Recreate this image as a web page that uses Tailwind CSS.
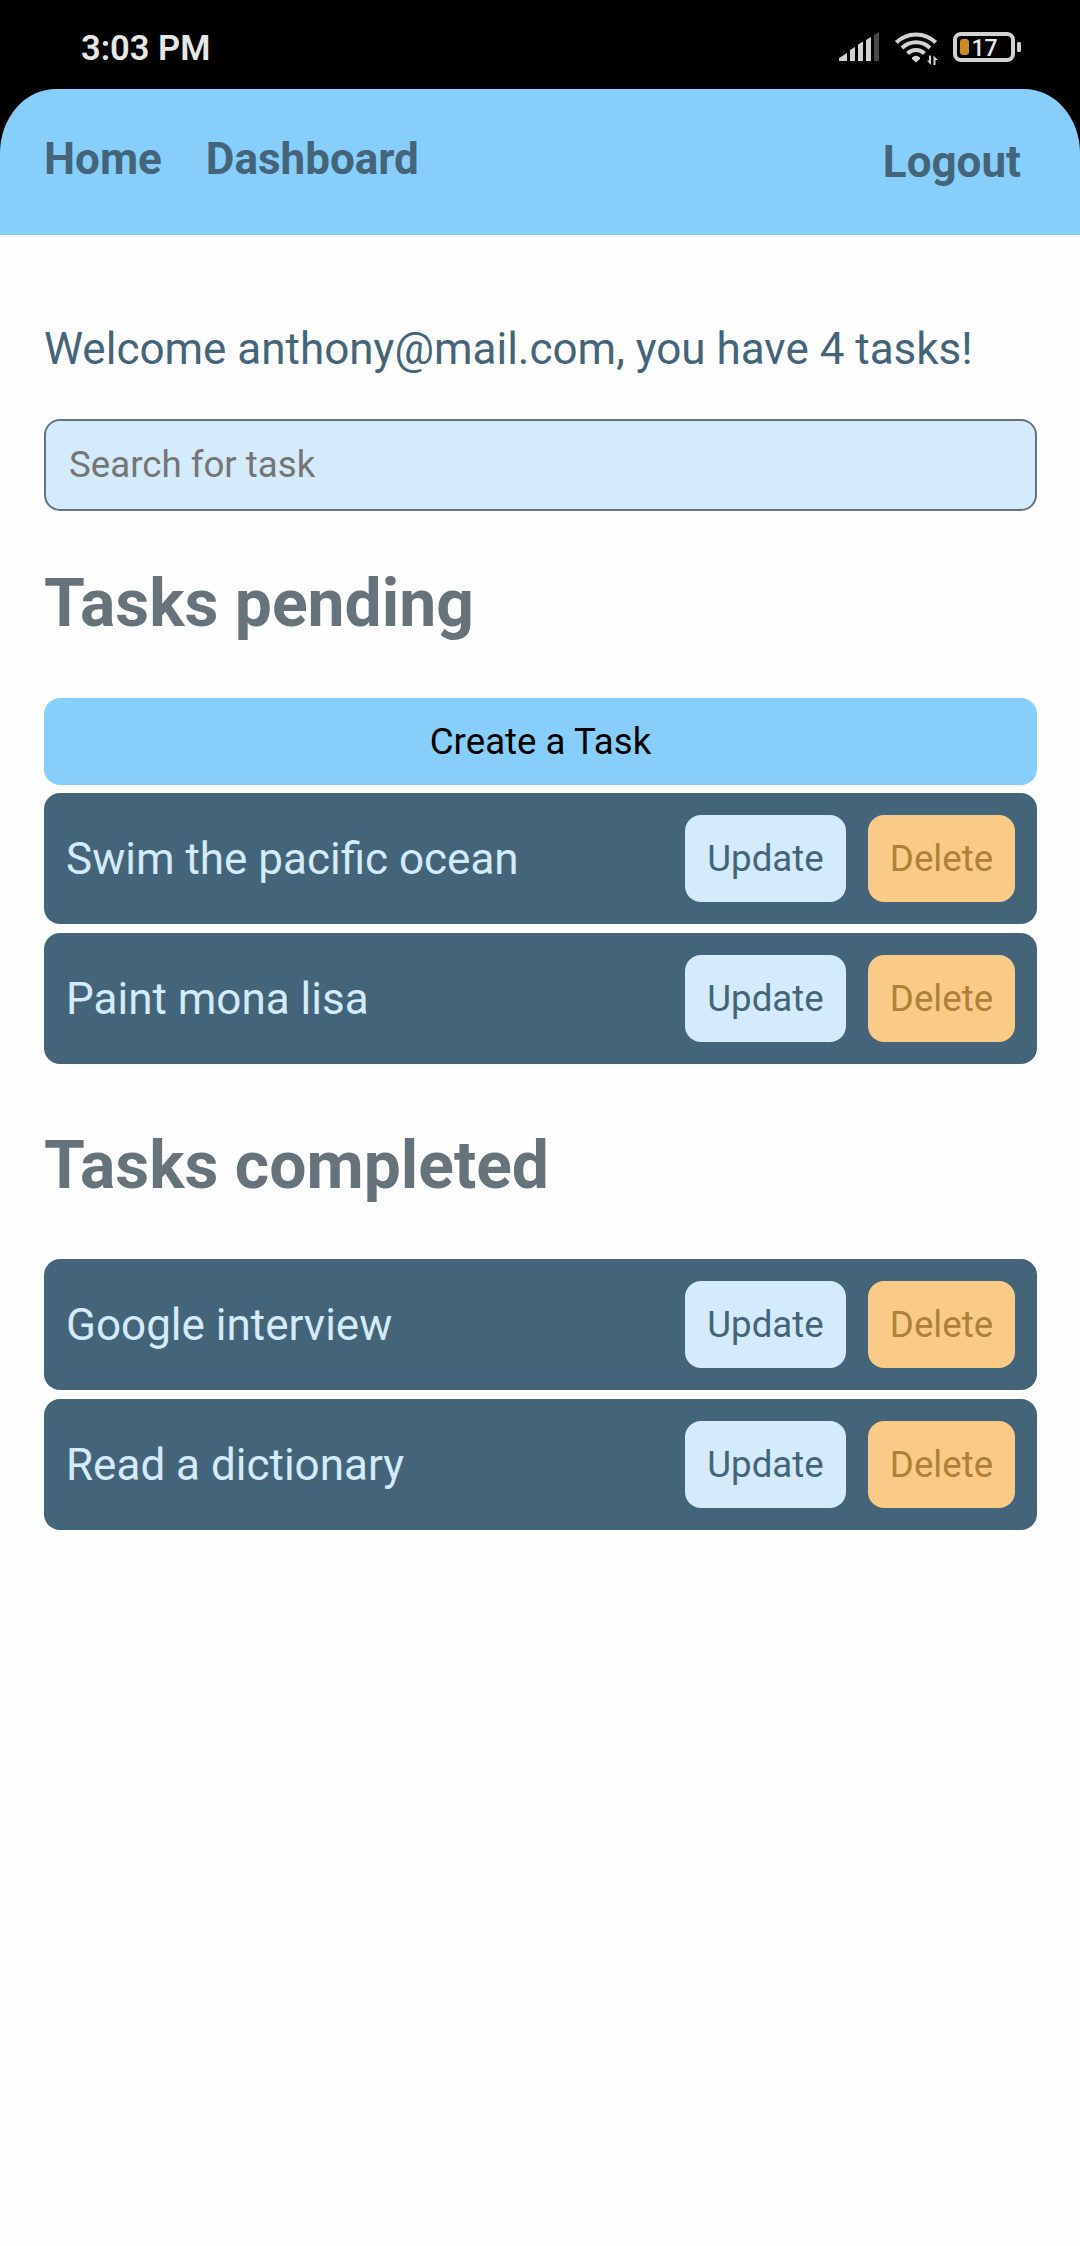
<!DOCTYPE html>
<html lang="en">
<head>
<meta charset="utf-8">
<title>Dashboard</title>
<script src="https://cdn.jsdelivr.net/npm/@tailwindcss/browser@4"></script>
</head>
<body class="min-h-[2246px] w-[1080px] bg-[#fefefe] font-[Roboto,sans-serif] text-[44px] leading-[52px] text-[#446579]">
  <div class="bg-black">
    <div class="flex h-[89px] items-center justify-between pl-[81px] pr-[58px] pt-[7px]">
      <span class="text-[34.500px] font-semibold leading-[40px] text-[#e6e6e6]">3:03 PM</span>
      <svg class="h-[36px] w-[184px] text-[#d2d2d2]" viewBox="838 30 184 36" fill="none">
        <g fill="currentColor">
          <path d="M839 61v-3l8-5v8zM850 61V50l5-3v14zM858 61V44.500l5-3v19.500zM866 61V40l5-3v24z"/>
          <path d="M874 61V35l5-3v29z" fill="#484848"/>
          <path d="M912 57.500q4-3.500 8 0v1.500l-4 3.500-4-3.500z"/>
          <path d="M929 55.500h2v9.500l-4-4.500h2zM933.500 65v-9.500l4.500 4.500h-2.500v5z"/>
          <rect x="1017" y="42" width="4" height="10" rx="1.500"/>
        </g>
        <g stroke="currentColor" stroke-width="4">
          <path d="M896.300 42.500a28 28 0 0 1 39.400 0M902 48a20 20 0 0 1 28 0M907.500 53.500a12 12 0 0 1 17 0"/>
          <rect x="955" y="34" width="58" height="26" rx="6"/>
        </g>
        <rect x="960" y="39" width="9" height="16" rx="3" fill="#cc8a22"/>
        <text x="971.500" y="56" font-family="Roboto" font-size="23" font-weight="500" fill="#e8e8e8">17</text>
      </svg>
    </div>
    <nav class="flex h-[146px] justify-between rounded-t-[56px_64px] bg-[#87cefa] px-11 font-bold">
      <div class="flex gap-11 pt-[44px]"><a>Home</a><a>Dashboard</a></div>
      <button class="mt-[47px] h-[52px] pr-[15px]">Logout</button>
    </nav>
  </div>
  <main class="px-11 pt-[87px]">
    <p class="pt-px">Welcome anthony@mail.com, you have 4 tasks!</p>
    <input class="mt-[44px] block h-[92px] w-[993px] rounded-2xl border-2 border-[#66737b] bg-[#d4ebfb] pb-[2px] pl-[23px] text-[36.670px] placeholder:text-[#757575]" placeholder="Search for task">
    <h2 class="mt-[54px] text-[66px] font-bold leading-[78px] text-[#66737b]">Tasks pending</h2>
    <button class="mt-[55px] block h-[87px] w-[993px] rounded-2xl bg-[#87cefa] text-[36.670px] text-black">Create a Task</button>
    <ul class="mt-2 flex w-[993px] flex-col gap-[9px] text-[#d4ebfb]">
      <li class="flex h-[131px] items-center gap-[22px] rounded-2xl bg-[#446579] px-[22px]">
        <span class="flex-1">Swim the pacific ocean</span>
        <button class="h-[87px] w-[161px] rounded-2xl bg-[#d4ebfb] text-[36.670px] text-[#446579]">Update</button>
        <button class="h-[87px] w-[147px] rounded-2xl bg-[#facb87] text-[36.670px] text-[#ae803a]">Delete</button>
      </li>
      <li class="flex h-[131px] items-center gap-[22px] rounded-2xl bg-[#446579] px-[22px]">
        <span class="flex-1">Paint mona lisa</span>
        <button class="h-[87px] w-[161px] rounded-2xl bg-[#d4ebfb] text-[36.670px] text-[#446579]">Update</button>
        <button class="h-[87px] w-[147px] rounded-2xl bg-[#facb87] text-[36.670px] text-[#ae803a]">Delete</button>
      </li>
    </ul>
    <h2 class="mt-[63px] text-[66px] font-bold leading-[78px] text-[#66737b]">Tasks completed</h2>
    <ul class="mt-[54px] flex w-[993px] flex-col gap-[9px] text-[#d4ebfb]">
      <li class="flex h-[131px] items-center gap-[22px] rounded-2xl bg-[#446579] px-[22px]">
        <span class="flex-1">Google interview</span>
        <button class="h-[87px] w-[161px] rounded-2xl bg-[#d4ebfb] text-[36.670px] text-[#446579]">Update</button>
        <button class="h-[87px] w-[147px] rounded-2xl bg-[#facb87] text-[36.670px] text-[#ae803a]">Delete</button>
      </li>
      <li class="flex h-[131px] items-center gap-[22px] rounded-2xl bg-[#446579] px-[22px]">
        <span class="flex-1">Read a dictionary</span>
        <button class="h-[87px] w-[161px] rounded-2xl bg-[#d4ebfb] text-[36.670px] text-[#446579]">Update</button>
        <button class="h-[87px] w-[147px] rounded-2xl bg-[#facb87] text-[36.670px] text-[#ae803a]">Delete</button>
      </li>
    </ul>
  </main>
</body>
</html>
